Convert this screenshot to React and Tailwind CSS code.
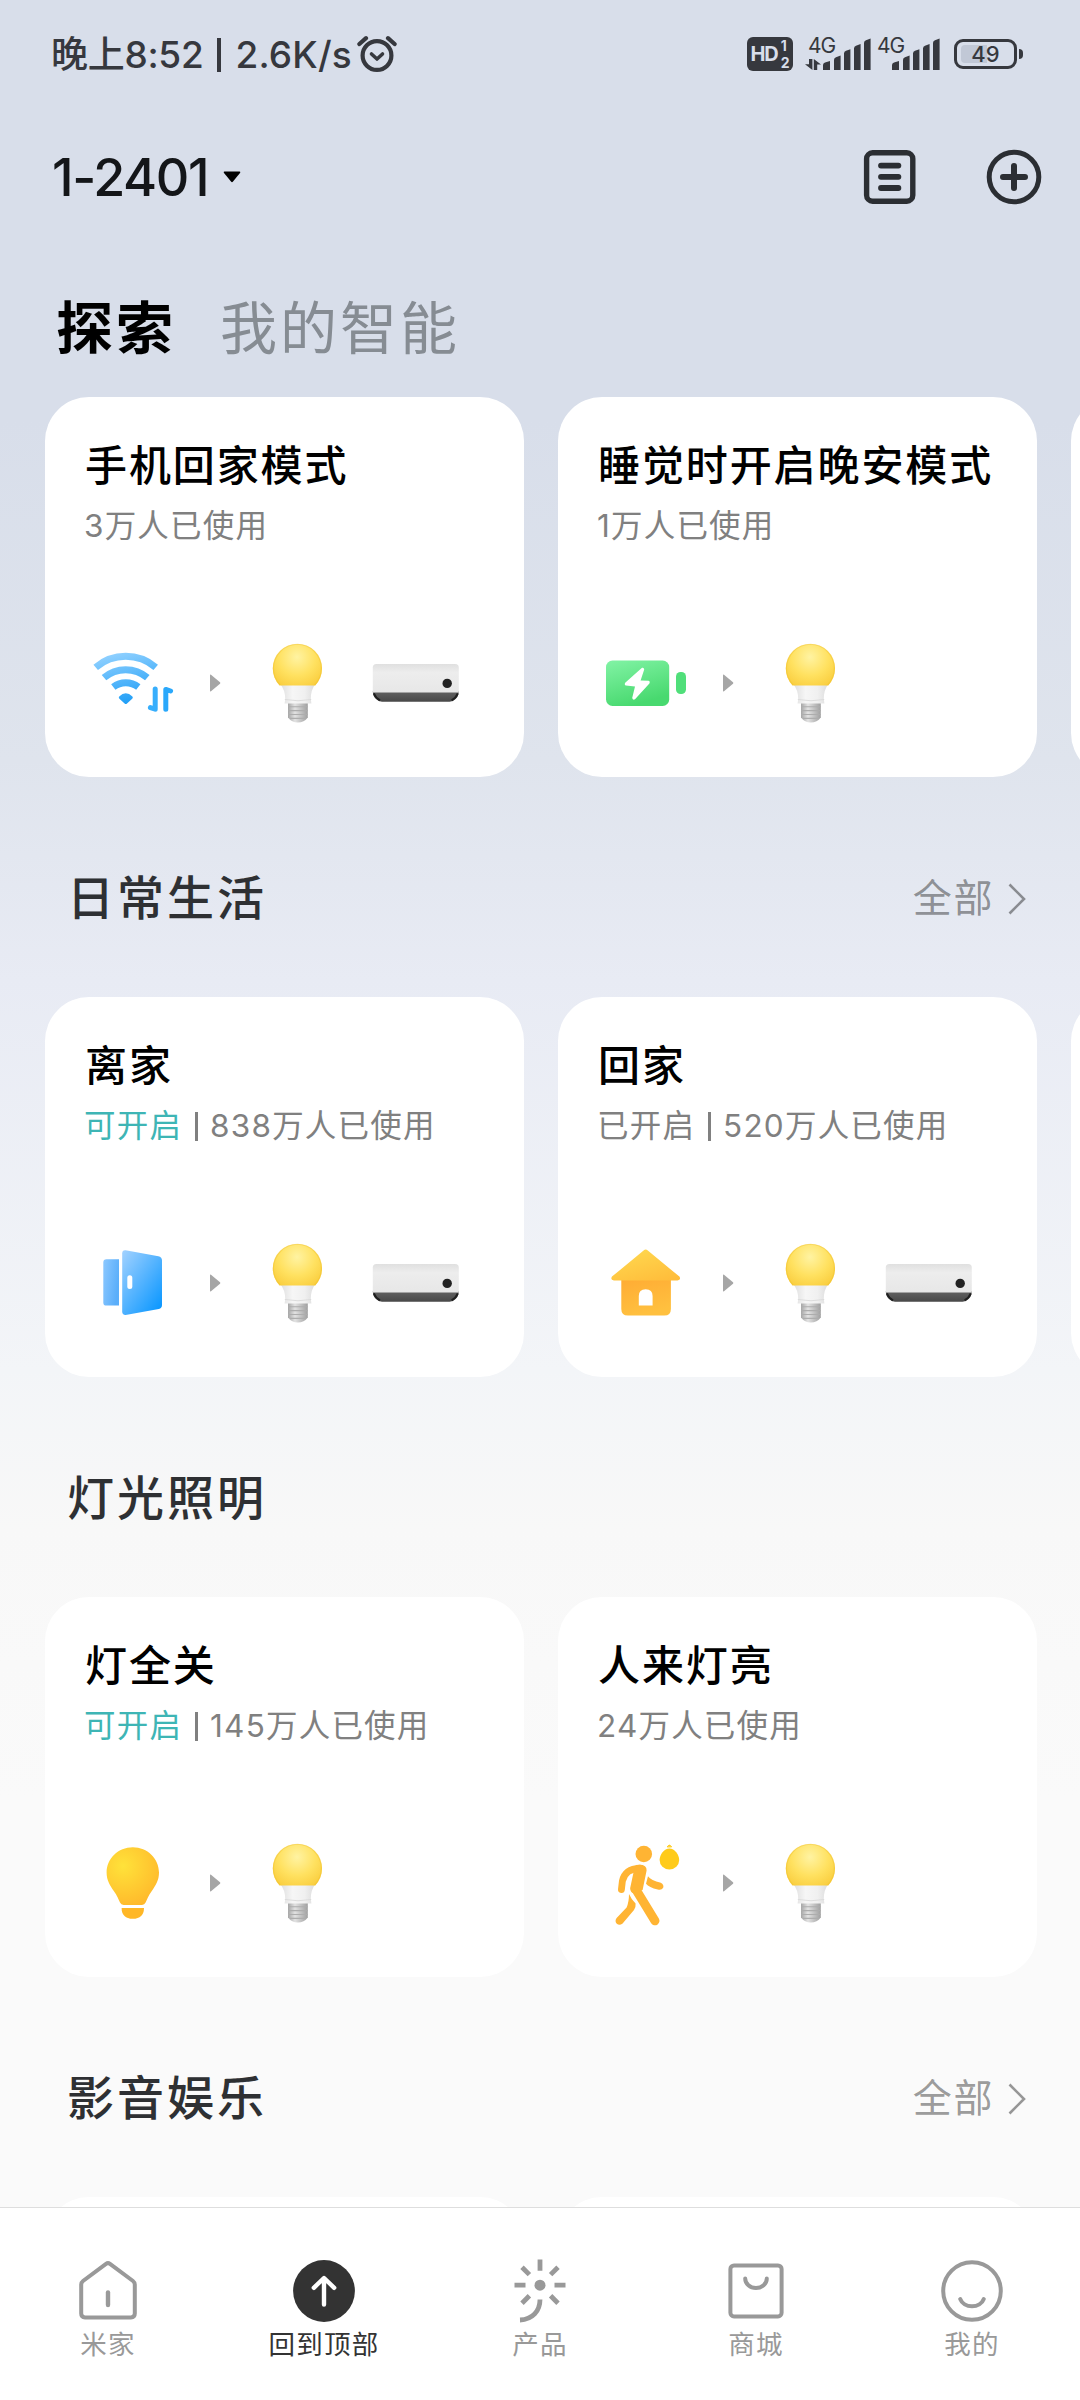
import React from 'react';

const WifiIcon = () => (
  <svg viewBox="0 0 90 90" className="w-[90px] h-[90px]" fill="none">
    <defs>
      <linearGradient id="wifi" gradientUnits="userSpaceOnUse" x1="35" y1="14" x2="50" y2="72">
        <stop offset="0" stopColor="#8fd0ff" />
        <stop offset="1" stopColor="#0f97f5" />
      </linearGradient>
    </defs>
    <path d="M10.7 29.3A46.4 46.4 0 0 1 70.7 29.3" stroke="url(#wifi)" strokeWidth="7" />
    <path d="M19 39.6A33.4 33.4 0 0 1 62.3 39.6" stroke="url(#wifi)" strokeWidth="7" />
    <path d="M28.3 49A20.5 20.5 0 0 1 53.3 49" stroke="url(#wifi)" strokeWidth="7" />
    <path d="M34.2 58.6Q40.8 51.8 47.4 58.6Q48.4 59.8 47.2 60.8L42 65.4Q40.8 66.4 39.6 65.4L34.4 60.8Q33.2 59.8 34.2 58.6Z" fill="url(#wifi)" />
    <path d="M70.2 51V71.2L65.4 69.6" stroke="#37aefc" strokeWidth="5" strokeLinecap="round" strokeLinejoin="round" />
    <path d="M80.8 71.2V51.4L85.6 53" stroke="#2aa8fb" strokeWidth="5" strokeLinecap="round" strokeLinejoin="round" />
  </svg>
);

const ChargingIcon = () => (
  <svg viewBox="0 0 90 90" className="w-[90px] h-[90px]">
    <defs>
      <linearGradient id="charging" x1="0" y1="0" x2="0.4" y2="1">
        <stop offset="0" stopColor="#82f3a5" />
        <stop offset="1" stopColor="#48d96f" />
      </linearGradient>
    </defs>
    <rect x="8" y="22.5" width="63.2" height="45.4" rx="6.5" fill="url(#charging)" />
    <rect x="78" y="34" width="10" height="22" rx="4.6" fill="#50df7a" />
    <path d="M44 29.8L27.2 44.8Q26 47 28 47.6L37 48.4L34.2 60Q35 62.6 37 61.2L51.4 45.6Q52.4 43.2 50.4 42.8L42.6 42.4L46.2 31.6Q46 29.2 44 29.8Z" fill="#fff" />
  </svg>
);

const DoorIcon = () => (
  <svg viewBox="0 0 90 90" className="w-[90px] h-[90px]">
    <defs>
      <linearGradient id="doorFrame" x1="0" y1="0" x2="1" y2="0.4">
        <stop offset="0" stopColor="#8cc8ff" />
        <stop offset="1" stopColor="#5aaefa" />
      </linearGradient>
      <linearGradient id="doorLeaf" x1="0" y1="0" x2="0.9" y2="1">
        <stop offset="0" stopColor="#a3d2ff" />
        <stop offset="1" stopColor="#0896ff" />
      </linearGradient>
    </defs>
    <path d="M21.5 21.3H34V67.6H21.5Q18.3 67.6 18.3 64.4V24.5Q18.3 21.3 21.5 21.3Z" fill="url(#doorFrame)" />
    <path d="M40.6 12.3L73.4 18.2Q77 19 77 22.4V67Q77 70.2 73.8 71L40.6 76.9Q37.2 77 37.2 73.8V15.2Q37.2 12 40.6 12.3Z" fill="url(#doorLeaf)" />
    <rect x="42.3" y="37.3" width="5" height="13.8" rx="2.5" fill="#fff" />
  </svg>
);

const HomeIcon = () => (
  <svg viewBox="0 0 90 90" className="w-[90px] h-[90px]">
    <defs>
      <linearGradient id="roof" x1="0.2" y1="0" x2="0.8" y2="1">
        <stop offset="0" stopColor="#ffd84f" />
        <stop offset="1" stopColor="#ffbd3b" />
      </linearGradient>
      <linearGradient id="wall" x1="0" y1="0" x2="0.3" y2="1">
        <stop offset="0" stopColor="#ffaa33" />
        <stop offset="1" stopColor="#ffc03f" />
      </linearGradient>
    </defs>
    <path fillRule="evenodd" d="M23.3 38H72.9V71Q72.9 77.6 66.3 77.6H30Q23.3 77.6 23.3 71ZM40.8 67.4H54.6V58Q54.6 51.2 47.7 51.2Q40.8 51.2 40.8 58Z" fill="url(#wall)" />
    <path d="M45.6 12.6Q47.7 10.6 49.8 12.6L81.4 38.6Q83.4 42 79.5 42.6H15.9Q12 42 14 38.6Z" fill="url(#roof)" />
  </svg>
);

const LampIcon = () => (
  <svg viewBox="0 0 90 90" className="w-[90px] h-[90px]">
    <defs>
      <radialGradient id="lamp" gradientUnits="userSpaceOnUse" cx="38" cy="28" r="42">
        <stop offset="0" stopColor="#ffe23a" />
        <stop offset="1" stopColor="#ffb92b" />
      </radialGradient>
    </defs>
    <path d="M47.8 9.2C62.5 9.2 74 20.6 74 34.6C74 42.4 70.6 47.6 66.8 53C63.4 57.8 62.2 61 60.6 64.6Q59.6 67 57 67H38.6Q36 67 35 64.6C33.4 61 32.2 57.8 28.8 53C25 47.6 21.6 42.4 21.6 34.6C21.6 20.6 33.1 9.2 47.8 9.2Z" fill="url(#lamp)" />
    <path d="M36.6 70H59Q58.8 80.8 47.8 80.8Q36.8 80.8 36.6 70Z" fill="#ffb726" />
  </svg>
);

const WalkIcon = () => (
  <svg viewBox="0 0 90 90" className="w-[90px] h-[90px]" fill="none" strokeLinecap="round" strokeLinejoin="round">
    <circle cx="45.8" cy="16" r="8.3" fill="#ffb433" />
    <path d="M42 30.2Q27 31 24.4 43L23.4 51.5" stroke="#ffb433" strokeWidth="6.8" />
    <path d="M38 27.1Q49 25.6 48.6 32.5L44.6 52L34.4 55Q31.6 52.6 32.4 49L35.6 34Z" fill="#ffb433" />
    <path d="M37.2 50.4L57 82.8" stroke="#ffb433" strokeWidth="9" />
    <path d="M31 56Q33 60.8 37.6 65.6Q38 69.4 36 72L24.6 85.6Q21.4 88 18.8 85.8Q16.4 83.2 18.6 80L28.6 69.4Q31 64 31 56Z" fill="#ffb433" />
    <path d="M50 38.2Q53 42.4 62.8 44.8Q66.2 46.6 65.2 49.8Q63.6 52.6 59.8 51.6Q51 49.6 48 45.8Z" fill="#ffb433" />
    <path d="M71.4 10.4C76.6 10.4 81.2 16.6 81.2 22A9.8 9.4 0 0 1 61.6 22C61.6 16.6 66.2 10.4 71.4 10.4Z" fill="#ffcb1a" />
    <path d="M69.4 8.6Q71.4 5.4 73.4 8.6Z" fill="#ffcb1a" stroke="#ffcb1a" strokeWidth="1" />
  </svg>
);

const Bulb = () => (
  <svg viewBox="0 0 90 90" className="w-[90px] h-[90px]">
    <defs>
      <radialGradient id="globe" gradientUnits="userSpaceOnUse" cx="45" cy="19" r="34">
        <stop offset="0" stopColor="#fff3a2" />
        <stop offset="0.55" stopColor="#ffe160" />
        <stop offset="1" stopColor="#f9cc3c" />
      </radialGradient>
      <linearGradient id="collar" x1="0" x2="1" y1="0" y2="0">
        <stop offset="0" stopColor="#dedede" />
        <stop offset="0.35" stopColor="#f6f6f6" />
        <stop offset="0.7" stopColor="#f0f0f0" />
        <stop offset="1" stopColor="#dcdcdc" />
      </linearGradient>
      <linearGradient id="screw" x1="0" x2="1" y1="0" y2="0">
        <stop offset="0" stopColor="#a6a6a6" />
        <stop offset="0.35" stopColor="#e2e2e2" />
        <stop offset="1" stopColor="#a0a0a0" />
      </linearGradient>
    </defs>
    <path d="M36 65H55.8V79.5Q52 84.6 45.9 84.6Q39.8 84.6 36 79.5Z" fill="url(#screw)" />
    <path d="M36 68.7H55.8M36 72.6H55.8M36 76.5H55.8M38 80.4H53.8" stroke="#adadad" strokeWidth="1.1" />
    <path d="M28.5 46.5H63Q58.8 52 58.8 61L59.4 65.4H32.6L33.2 61Q33.2 52 28.5 46.5Z" fill="url(#collar)" />
    <path d="M32.8 61.5Q46 64 59.2 61.5" stroke="#d9d9d9" strokeWidth="0.9" fill="none" />
    <path d="M27.6 47.6A24.6 24.6 0 1 1 63.2 47.6Z" fill="url(#globe)" />
    <path d="M28.2 47A24 24 0 1 1 62.6 47" fill="none" stroke="#f0c02c" strokeWidth="1.2" opacity="0.45" />
  </svg>
);

const AirConditioner = () => (
  <svg viewBox="0 0 90 90" className="w-[90px] h-[90px]">
    <defs>
      <linearGradient id="acBody" x1="0" y1="0" x2="0" y2="1">
        <stop offset="0" stopColor="#e0e0e0" />
        <stop offset="0.3" stopColor="#ededed" />
        <stop offset="1" stopColor="#e7e7e7" />
      </linearGradient>
      <linearGradient id="acVent" x1="0" y1="0" x2="0" y2="1">
        <stop offset="0" stopColor="#626262" />
        <stop offset="1" stopColor="#484848" />
      </linearGradient>
    </defs>
    <path d="M1.8 53H87.8Q87.8 58 84.6 61Q82 63.7 78.6 63.7H11Q7.6 63.7 5 61Q1.8 58 1.8 53Z" fill="url(#acVent)" />
    <path d="M2.8 55.4Q4.6 60 9 62.4M86.8 55.4Q85 60 80.6 62.4" stroke="#1f1f1f" strokeWidth="2" fill="none" />
    <path d="M5.4 26H84.2Q87.8 26 87.8 29.6V54.4H1.8V29.6Q1.8 26 5.4 26Z" fill="url(#acBody)" />
    <circle cx="76.2" cy="45.4" r="4.7" fill="#222222" />
  </svg>
);

const Arrow = () => (
  <svg viewBox="0 0 12 18" className="w-3 h-[18px] ml-[34px] mr-[31px]">
    <path d="M1 1.2Q1 0 2 0.8L11 8.2Q11.8 9 11 9.8L2 17.2Q1 18 1 16.8Z" fill="#a6a6a6" />
  </svg>
);

const sections = [
  {
    cards: [
      { title: '手机回家模式', used: '3万人已使用', trigger: WifiIcon, devices: [Bulb, AirConditioner] },
      { title: '睡觉时开启晚安模式', used: '1万人已使用', trigger: ChargingIcon, devices: [Bulb] },
      null,
    ],
  },
  {
    title: '日常生活',
    more: true,
    cards: [
      { title: '离家', status: '可开启', used: '838万人已使用', trigger: DoorIcon, devices: [Bulb, AirConditioner] },
      { title: '回家', status: '已开启', enabled: true, used: '520万人已使用', trigger: HomeIcon, devices: [Bulb, AirConditioner] },
      null,
    ],
  },
  {
    title: '灯光照明',
    cards: [
      { title: '灯全关', status: '可开启', used: '145万人已使用', trigger: LampIcon, devices: [Bulb] },
      { title: '人来灯亮', used: '24万人已使用', trigger: WalkIcon, devices: [Bulb] },
    ],
  },
  {
    title: '影音娱乐',
    more: true,
    cards: [null, null],
  },
];

const SceneCard = ({ card }) => {
  if (!card) {
    return <div className="w-[479px] h-[380px] shrink-0 rounded-[44px] bg-white" />;
  }

  const Trigger = card.trigger;

  return (
    <div className="w-[479px] h-[380px] shrink-0 rounded-[44px] bg-white pl-[39px] pt-[41px] whitespace-nowrap">
      <h3 className="ml-px text-[42px] leading-[56px] font-medium tracking-[1.9px] text-black">{card.title}</h3>
      <p className="mt-1 text-[31.5px] leading-[56px] tracking-[1.2px] text-[#808080]">
        {card.status && (
          <>
            <span className={card.enabled ? 'text-[#808080]' : 'text-[#3eb5b5]'}>{card.status}</span>
            <span className="inline-block w-[3px] h-[29px] ml-[13px] mr-[12px] align-[-4px] bg-[#808080]" />
          </>
        )}
        {card.used}
      </p>
      <div className="flex items-center mt-[84px] ml-px">
        <Trigger />
        <Arrow />
        <div className="flex gap-[29px]">
          {card.devices.map((Device, i) => (
            <Device key={i} />
          ))}
        </div>
      </div>
    </div>
  );
};

const Section = ({ section }) => (
  <section className="shrink-0">
    {section.title && (
      <div className="flex items-center justify-between h-[220px] pt-[23px] pl-[67px] pr-[54px]">
        <h2 className="text-[47px] font-medium tracking-[3px] text-[#2e3033]">{section.title}</h2>
        {section.more && (
          <div className="flex items-center text-black/40">
            <span className="text-[39px] tracking-[1.6px]">全部</span>
            <svg viewBox="0 0 18 32" className="w-[18px] h-8 ml-[14px]" fill="none">
              <path d="M1.5 1.5L16 16L1.5 30.5" stroke="currentColor" strokeWidth="2.6" />
            </svg>
          </div>
        )}
      </div>
    )}
    <div className="flex gap-[34px] pl-[45px]">
      {section.cards.map((card, i) => (
        <SceneCard key={i} card={card} />
      ))}
    </div>
  </section>
);

const SignalBars = () => (
  <svg viewBox="0 0 48 32" className="w-12 h-8" fill="#36383e">
    <path d="M0 32V27Q0 25 2 24.4L7 23V32ZM11 32V22Q11 20 13 19.2L17.6 17.6V32ZM21 32V15.4Q21 13.6 23 12.8L27.4 11.2V32ZM31 32V10.4Q31 8.6 33 7.8L37.6 6V32ZM41 32V5Q41 3 43 2.2L47.6 0.6V32Z" />
  </svg>
);

const StatusBar = () => (
  <div className="flex items-center shrink-0 h-[108px] pl-[51px] pr-[57px] text-[#36383e]">
    <div className="flex items-center pt-px text-[37px] font-medium whitespace-nowrap">
      <span className="tracking-[-0.3px]">晚上8:52</span>
      <span className="w-[4px] h-[34px] ml-[14px] mr-[14px] bg-[#36383e]" />
      <span className="tracking-[0.2px]">2.6K/s</span>
    </div>
    <svg viewBox="0 0 40 38" className="w-10 h-[38px] ml-[5px]" fill="none" stroke="#36383e" strokeWidth="4.2">
      <circle cx="20" cy="20.5" r="14.4" />
      <path d="M14.5 19L20 24L25.5 19" strokeWidth="3.6" strokeLinejoin="round" strokeLinecap="round" />
      <path d="M2.4 9L9 3.2M37.6 9L31 3.2" strokeLinecap="round" />
    </svg>
    <div className="flex items-center ml-auto">
      <div className="flex items-center justify-center w-[46px] h-[34px] rounded-md bg-[#36383e] text-[#d8deea] font-bold">
        <span className="text-[20px] tracking-[-1px]">HD</span>
        <span className="flex flex-col ml-[3px] text-[14px] leading-[17px]">
          <span>1</span>
          <span>2</span>
        </span>
      </div>
      <div className="relative flex w-[66px] ml-3 justify-end">
        <span className="absolute left-[3px] -top-[4px] text-[21px] leading-6 tracking-[-1px]">4G</span>
        <svg viewBox="0 0 16 11" className="absolute left-0 bottom-0 w-4 h-[11px]" fill="#36383e">
          <path d="M4 0H7.4V11L0 5.2H4ZM8.8 11V0L16 5.4H12.2V11Z" />
        </svg>
        <SignalBars />
      </div>
      <div className="relative flex w-[66px] ml-[3px] justify-end">
        <span className="absolute left-[3px] -top-[4px] text-[21px] leading-6 tracking-[-1px]">4G</span>
        <SignalBars />
      </div>
      <div className="relative flex items-center justify-center w-[63px] h-[30px] ml-[14px] rounded-[9px] border-3 border-[#36383e]">
        <div className="absolute left-1 top-[3px] w-[26px] h-[18px] rounded-l-[4px] bg-[#c1c8d6]" />
        <span className="relative text-[22px] leading-6 font-medium">49</span>
      </div>
      <div className="w-1 h-[10px] ml-0.5 rounded-r-sm bg-[#36383e]" />
    </div>
  </div>
);

const Header = () => (
  <div className="flex items-center shrink-0 h-[138px] pl-[52px] pr-[38px]">
    <span className="mt-0.5 text-[52px] font-medium tracking-[-1.4px] text-[#141619]">1-2401</span>
    <svg viewBox="0 0 18 12" className="w-[18px] h-3 ml-[15px]">
      <path d="M1.4 0.4H16.6Q18 0.6 17 2L10 10.6Q9 11.8 8 10.6L1 2Q0 0.6 1.4 0.4Z" fill="#000" />
    </svg>
    <svg viewBox="0 0 54 54" className="w-[54px] h-[54px] ml-auto" fill="none" stroke="#2b2e33" strokeLinecap="round">
      <rect x="3.6" y="2.8" width="46.2" height="48.4" rx="6" strokeWidth="5.4" />
      <path d="M18 15.6H35.4M18 26.8H35.4M18 38H35.4" strokeWidth="5.8" />
    </svg>
    <svg viewBox="0 0 56 56" className="w-14 h-14 ml-[69px]" fill="none" stroke="#2b2e33" strokeLinecap="round">
      <circle cx="28" cy="28" r="24.8" strokeWidth="5" />
      <path d="M17 28H39M28 17V39" strokeWidth="6" />
    </svg>
  </div>
);

const navItems = [
  {
    label: '米家',
    icon: (
      <>
        <path d="M13.2 34.6Q13.2 32.4 15 31L38 13.8Q40 12.4 42 13.8L65 31Q66.8 32.4 66.8 34.6V63.6Q66.8 67.4 63 67.4H17Q13.2 67.4 13.2 63.6Z" strokeWidth="4" />
        <path d="M40 42.5V55" strokeWidth="4.4" strokeLinecap="round" />
      </>
    ),
  },
  {
    label: '回到顶部',
    active: true,
    icon: (
      <>
        <circle cx="40" cy="41" r="30.9" fill="#333" stroke="none" />
        <path d="M40 28.5V54.6M29.8 37.8L40 28L50.2 37.8" stroke="#fff" strokeWidth="4.4" strokeLinecap="round" strokeLinejoin="round" />
      </>
    ),
  },
  {
    label: '产品',
    icon: (
      <>
        <circle cx="40" cy="35.2" r="5.5" fill="#999" stroke="none" />
        <path d="M40 9.5V20.8M14.5 35.2H25.5M54.5 35.2H65.5M22 17.2L29.4 24.6M58 17.2L50.6 24.6M29.4 45.8L22 53.2M50.6 45.8L58 53.2" strokeWidth="4.8" />
        <path d="M40 49.5C40 61 32.4 69.6 20 70" strokeWidth="4.8" />
      </>
    ),
  },
  {
    label: '商城',
    icon: (
      <>
        <rect x="14.4" y="15.4" width="51.2" height="51" rx="3.6" strokeWidth="4" />
        <path d="M29.2 28.4A10.8 9.6 0 0 0 50.8 28.4" strokeWidth="4" strokeLinecap="round" />
      </>
    ),
  },
  {
    label: '我的',
    icon: (
      <>
        <circle cx="40" cy="41" r="28.8" strokeWidth="4" />
        <path d="M28.2 49A12.4 10.6 0 0 0 51.8 49" strokeWidth="4" strokeLinecap="round" />
      </>
    ),
  },
];

const BottomNav = () => (
  <nav className="flex shrink-0 h-[193px] border-t border-[#dedede] bg-white pt-[42px]">
    {navItems.map((item) => (
      <div key={item.label} className="flex flex-col items-center flex-1">
        <svg viewBox="0 0 80 80" className="w-20 h-20" fill="none" stroke="#999">
          {item.icon}
        </svg>
        <span className={`-mt-[6px] text-[26.5px] leading-[40px] tracking-[1.2px] ${item.active ? 'text-[#333333]' : 'text-[#999999]'}`}>
          {item.label}
        </span>
      </div>
    ))}
  </nav>
);

export default function App() {
  return (
    <div className="flex flex-col w-[1080px] h-[2400px] overflow-hidden bg-[linear-gradient(180deg,#d8deea_0px,#d8deea_420px,#dfe4ed_760px,#e8ebf4_980px,#f3f5f8_1370px,#f8f8f8_1530px,#fafafa_1800px,#fafafa_2400px)] font-['Inter','Noto_Sans_CJK_SC',sans-serif]">
      <StatusBar />
      <Header />
      <div className="flex items-center shrink-0 h-[151px] pt-[15px] pl-[56px]">
        <span className="text-[57px] font-bold tracking-[3px] text-black">探索</span>
        <span className="ml-[44px] text-[57px] tracking-[3px] text-[#868c93]">我的智能</span>
      </div>
      <main className="flex flex-col flex-1 min-h-0 overflow-hidden">
        {sections.map((section, i) => (
          <Section key={i} section={section} />
        ))}
      </main>
      <BottomNav />
    </div>
  );
}
